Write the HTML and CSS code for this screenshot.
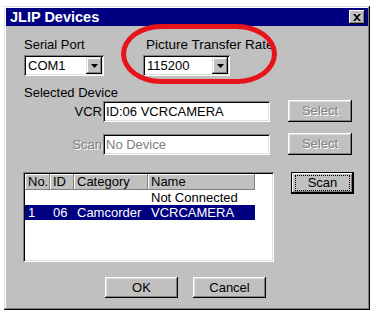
FILE: index.html
```html
<!DOCTYPE html>
<html lang="en">
<head>
    <meta charset="UTF-8">
    <title>JLIP Devices</title>
    <link rel="stylesheet" href="styles.css">
</head>
<body>
    <div class="dialog">
        <div class="titlebar">
            <span class="title">JLIP Devices</span>
            <button class="close" title="Close">
                <svg width="8" height="7" viewBox="0 0 8 7"><path d="M0 0h2l2 2 2-2h2L5 3.5 8 7H6L4 5 2 7H0l3-3.5z" fill="#000"/></svg>
            </button>
        </div>

        <div class="content">
            <div class="ports">
                <div class="field">
                    <label>Serial Port</label>
                    <div class="combo port">
                        <span class="value">COM1</span>
                        <span class="drop"><svg width="7" height="4" viewBox="0 0 7 4"><path d="M0 0h7L3.5 4z" fill="#000"/></svg></span>
                    </div>
                </div>
                <div class="field rate">
                    <label>Picture Transfer Rate</label>
                    <div class="combo speed">
                        <span class="value">115200</span>
                        <span class="drop"><svg width="7" height="4" viewBox="0 0 7 4"><path d="M0 0h7L3.5 4z" fill="#000"/></svg></span>
                    </div>
                </div>
            </div>

            <div class="group-label">Selected Device</div>

            <div class="device-row">
                <label>VCR</label>
                <div class="textbox">ID:06 VCRCAMERA</div>
                <button class="btn disabled">Select</button>
            </div>
            <div class="device-row second">
                <label class="dim">Scan</label>
                <div class="textbox dim-text">No Device</div>
                <button class="btn disabled">Select</button>
            </div>

            <div class="list-row">
                <div class="listview">
                    <div class="lv-head">
                        <span class="c-no">No.</span>
                        <span class="c-id">ID</span>
                        <span class="c-cat">Category</span>
                        <span class="c-name">Name</span>
                    </div>
                    <div class="lv-row">
                        <span class="c-no"></span>
                        <span class="c-id"></span>
                        <span class="c-cat"></span>
                        <span class="c-name">Not Connected</span>
                    </div>
                    <div class="lv-row selected">
                        <span class="c-no">1</span>
                        <span class="c-id">06</span>
                        <span class="c-cat">Camcorder</span>
                        <span class="c-name">VCRCAMERA</span>
                    </div>
                </div>
                <button class="btn default"><span class="focus">Scan</span></button>
            </div>

            <div class="actions">
                <button class="btn wide">OK</button>
                <button class="btn wide">Cancel</button>
            </div>
        </div>

        <div class="highlight"></div>
    </div>
</body>
</html>
```

FILE: styles.css
```css
body {
    margin: 0;
    background: #fff;
    font-family: "Liberation Sans", Arial, sans-serif;
    font-size: 13px;
    color: #000;
}
.dialog {
    position: relative;
    width: 366px;
    height: 304px;
    margin: 6px 0 0 4px;
    padding: 2px;
    box-sizing: border-box;
    background: #c0c0c0;
    box-shadow: inset -1px -1px #000, inset 1px 1px #dfdfdf, inset -2px -2px #808080, inset 2px 2px #fff;
}
.titlebar {
    height: 18px;
    background: #000080;
    display: flex;
    align-items: center;
    justify-content: space-between;
    padding: 0 3px 0 4px;
}
.title {
    color: #fff;
    font-weight: bold;
    font-size: 14.5px;
}
.close {
    width: 16px;
    height: 14px;
    padding: 0;
    border: none;
    background: #c0c0c0;
    box-shadow: inset -1px -1px #000, inset 1px 1px #fff, inset -2px -2px #808080;
    display: flex;
    align-items: center;
    justify-content: center;
}
.content {
    padding: 11px 0 0 18px;
}
label {
    display: block;
    line-height: 15px;
}
.ports {
    display: flex;
    gap: 39px;
}
.field label {
    margin-bottom: 3px;
}
.rate label {
    padding-left: 3px;
    font-size: 13.5px;
}
.combo {
    height: 21px;
    box-sizing: border-box;
    padding: 2px;
    background: #fff;
    box-shadow: inset 1px 1px #808080, inset -1px -1px #fff, inset 2px 2px #000, inset -2px -2px #dfdfdf;
    display: flex;
    align-items: center;
    justify-content: space-between;
}
.combo.port { width: 80px; }
.combo.speed { width: 87px; }
.combo .value {
    padding-left: 2px;
}
.drop {
    width: 16px;
    height: 17px;
    background: #c0c0c0;
    box-shadow: inset -1px -1px #000, inset 1px 1px #dfdfdf, inset -2px -2px #808080, inset 2px 2px #fff;
    display: flex;
    align-items: center;
    justify-content: center;
}
.group-label {
    line-height: 15px;
    margin-top: 9px;
}
.device-row {
    display: flex;
    align-items: center;
    margin-top: 1px;
}
.device-row.second {
    margin-top: 12px;
}
.device-row label {
    width: 79px;
    text-align: right;
    padding-right: 1px;
    box-sizing: border-box;
}
.dim, .btn.disabled {
    color: #808080;
    text-shadow: 1px 1px #fff;
}
.textbox {
    width: 167px;
    height: 21px;
    box-sizing: border-box;
    padding: 3px 3px;
    background: #fff;
    line-height: 15px;
    box-shadow: inset 1px 1px #808080, inset -1px -1px #fff, inset 2px 2px #000, inset -2px -2px #dfdfdf;
}
.dim-text {
    color: #808080;
}
.btn {
    font-family: inherit;
    font-size: 13px;
    height: 22px;
    width: 64px;
    padding: 0;
    border: none;
    background: #c0c0c0;
    color: #000;
    box-shadow: inset -1px -1px #000, inset 1px 1px #fff, inset -2px -2px #808080, inset 2px 2px #dfdfdf;
}
.device-row .btn {
    margin: -2px 0 0 18px;
}
.list-row {
    display: flex;
    align-items: flex-start;
    margin-top: 17px;
}
.listview {
    width: 251px;
    height: 90px;
    margin-left: -1px;
    box-sizing: border-box;
    padding: 2px;
    background: #fff;
    box-shadow: inset 1px 1px #808080, inset -1px -1px #fff, inset 2px 2px #000, inset -2px -2px #dfdfdf;
}
.lv-head, .lv-row {
    display: flex;
    width: 230px;
}
.lv-head span {
    height: 16px;
    line-height: 16px;
    padding-left: 3px;
    box-sizing: border-box;
    background: #c0c0c0;
    box-shadow: inset -1px -1px #808080, inset 1px 1px #fff;
}
.lv-row span {
    height: 15px;
    line-height: 15px;
    padding-left: 3px;
    box-sizing: border-box;
}
.c-no { width: 25px; }
.c-id { width: 24px; }
.c-cat { width: 74px; }
.c-name { width: 107px; }
.lv-row.selected {
    background: #000080;
    color: #fff;
}
.btn.default {
    width: 63px;
    margin-left: 17px;
    box-shadow: inset 0 0 0 1px #000, inset -2px -2px #000, inset 2px 2px #fff, inset -3px -3px #808080;
    display: flex;
    align-items: center;
    justify-content: center;
}
.focus {
    display: block;
    width: 53px;
    height: 14px;
    line-height: 14px;
    text-align: center;
    outline: 1px dotted #000;
}
.actions {
    display: flex;
    gap: 15px;
    margin: 15px 0 0 81px;
}
.btn.wide {
    width: 73px;
    height: 21px;
}
.highlight {
    position: absolute;
    left: 117px;
    top: 18px;
    width: 156px;
    height: 60px;
    box-sizing: border-box;
    border: 5px solid #e8141c;
    border-radius: 40px / 30px;
}
```
